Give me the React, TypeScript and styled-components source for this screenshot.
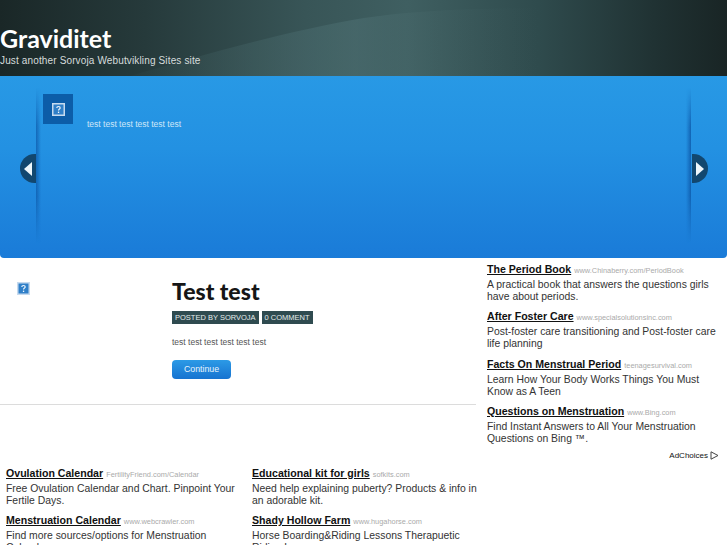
import React from 'react'
import styled, { createGlobalStyle } from 'styled-components'

const GlobalStyle = createGlobalStyle`
  html, body {
    margin: 0;
    padding: 0;
    height: 545px;
    overflow: hidden;
    background: #fff;
    font-family: "Liberation Sans", Arial, sans-serif;
  }
`

const Page = styled.div`
  width: 727px;
  height: 545px;
  overflow: hidden;
`

const Header = styled.header`
  position: relative;
  height: 76px;
  box-sizing: border-box;
  padding-top: 24px;
  overflow: hidden;
  background: linear-gradient(
    90deg,
    #1a2727 0%,
    #263a3b 20%,
    #385557 42%,
    #3f5f61 56%,
    #2f4b4d 74%,
    #203233 90%,
    #192525 100%
  );
`

const Swoosh = styled.svg`
  position: absolute;
  left: 0;
  top: 0;
`

const SiteTitle = styled.h1`
  position: relative;
  margin: 0;
  font-family: Lato, sans-serif;
  font-size: 25px;
  line-height: 28px;
  font-weight: 700;
  color: #fff;
`

const Tagline = styled.div`
  position: relative;
  margin-top: 2px;
  font-size: 10px;
  line-height: 13px;
  letter-spacing: 0.14px;
  color: #d6dcdc;
`

const Banner = styled.section`
  position: relative;
  height: 182px;
  box-sizing: border-box;
  padding: 12px 36px 15px;
  border-radius: 0 0 4px 4px;
  background: linear-gradient(180deg, #2899e5 0%, #2391e2 40%, #1a7bd8 100%);
`

const SlidePanel = styled.div`
  position: relative;
  height: 100%;
  box-sizing: border-box;
  padding: 6px 0 0 7px;
  display: flex;
  align-items: flex-start;
  gap: 14px;

  &::before,
  &::after {
    content: '';
    position: absolute;
    top: 0;
    bottom: 0;
    width: 5px;
    -webkit-mask-image: linear-gradient(180deg, transparent 0%, #000 25%, #000 70%, transparent 100%);
    mask-image: linear-gradient(180deg, transparent 0%, #000 25%, #000 70%, transparent 100%);
  }

  &::before {
    left: 0;
    background: linear-gradient(90deg, rgba(14, 90, 170, 0.75), rgba(14, 90, 170, 0));
  }

  &::after {
    right: 0;
    background: linear-gradient(270deg, rgba(14, 90, 170, 0.85), rgba(14, 90, 170, 0));
  }
`

const Thumb = styled.div`
  width: 30px;
  height: 30px;
  flex: none;
  display: flex;
  align-items: center;
  justify-content: center;
  background: #0c5da8;
`

const SlideText = styled.p`
  margin: 25px 0 0;
  font-size: 8.5px;
  line-height: 11px;
  color: #cfe6f8;
`

const Arrow = styled.div<{ $side: 'left' | 'right' }>`
  position: absolute;
  top: 78px;
  ${(p) => (p.$side === 'left' ? 'left: 20px;' : 'right: 19px;')}
  width: 16px;
  height: 29px;
  display: flex;
  align-items: center;
  justify-content: center;
  background: #12476f;
  border-radius: ${(p) => (p.$side === 'left' ? '15px 0 0 15px' : '0 15px 15px 0')};
`

const Main = styled.div`
  display: flex;
  align-items: flex-start;
`

const Content = styled.div`
  width: 476px;
  flex: none;
`

const Post = styled.article`
  height: 147px;
  box-sizing: border-box;
  padding: 24px 0 0 17px;
  display: grid;
  grid-template-columns: 155px 1fr;
  border-bottom: 1px solid #dcdcdc;
`

const PostBody = styled.div`
  display: flex;
  flex-direction: column;
  align-items: flex-start;
`

const PostTitle = styled.h2`
  margin: -6px 0 0;
  font-family: Lato, sans-serif;
  font-size: 23px;
  line-height: 30px;
  font-weight: 900;
  color: #161616;
`

const Meta = styled.div`
  display: flex;
  gap: 3px;
  margin-top: 5px;
`

const MetaTag = styled.span`
  height: 13px;
  padding: 0 3px;
  font-size: 7.5px;
  line-height: 13px;
  text-transform: uppercase;
  color: #e4ecec;
  background: #2f4b50;
`

const PostText = styled.p`
  margin: 13px 0 0;
  font-size: 8.5px;
  line-height: 11px;
  color: #555;
`

const ContinueButton = styled.a`
  margin-top: 12px;
  width: 59px;
  height: 19px;
  text-align: center;
  font-size: 8.8px;
  line-height: 18px;
  color: #e8f4fc;
  border-radius: 4px;
  background: linear-gradient(180deg, #2c9ae6 0%, #1673d0 100%);
`

const AdColumn = styled.aside`
  margin: 4px 0 0 11px;
  width: 240px;
`

const AdRow = styled.div`
  display: grid;
  grid-template-columns: 246px 232px;
  margin: 61px 0 0 6px;
`

const Ad = styled.div`
  height: 47.4px;
  padding-right: 4px;
`

const AdHeading = styled.div`
  font-size: 10.6px;
  line-height: 14px;
  white-space: nowrap;
`

const AdTitle = styled.a`
  font-weight: 700;
  color: #111;
  text-decoration: underline;
`

const AdUrl = styled.span`
  margin-left: 3px;
  font-size: 7.4px;
  color: #aaa;
`

const AdText = styled.p`
  margin: 1px 0 0;
  font-size: 10.4px;
  line-height: 12px;
  color: #333;
`

const AdChoices = styled.div`
  margin-top: -2px;
  margin-right: 8px;
  display: flex;
  justify-content: flex-end;
  align-items: center;
  gap: 2px;
  font-size: 8px;
  line-height: 12px;
  color: #111;
`

const sideAds = [
  {
    title: 'The Period Book',
    url: 'www.Chinaberry.com/PeriodBook',
    text: 'A practical book that answers the questions girls have about periods.',
  },
  {
    title: 'After Foster Care',
    url: 'www.specialsolutionsinc.com',
    text: 'Post-foster care transitioning and Post-foster care life planning',
  },
  {
    title: 'Facts On Menstrual Period',
    url: 'teenagesurvival.com',
    text: 'Learn How Your Body Works Things You Must Know as A Teen',
  },
  {
    title: 'Questions on Menstruation',
    url: 'www.Bing.com',
    text: 'Find Instant Answers to All Your Menstruation Questions on Bing \u2122.',
  },
]

const bottomAds = [
  {
    title: 'Ovulation Calendar',
    url: 'FertilityFriend.com/Calendar',
    text: 'Free Ovulation Calendar and Chart. Pinpoint Your Fertile Days.',
  },
  {
    title: 'Educational kit for girls',
    url: 'sofkits.com',
    text: 'Need help explaining puberty? Products & info in an adorable kit.',
  },
  {
    title: 'Menstruation Calendar',
    url: 'www.webcrawler.com',
    text: 'Find more sources/options for Menstruation Calendars',
  },
  {
    title: 'Shady Hollow Farm',
    url: 'www.hugahorse.com',
    text: 'Horse Boarding&Riding Lessons Therapuetic Riding Lessons',
  },
]

const MissingImage = () => (
  <svg width="13" height="13" viewBox="0 0 13 13" aria-hidden="true">
    <rect x="0.75" y="0.75" width="11.5" height="11.5" fill="#2f7fc8" stroke="#c6daee" strokeWidth="1.5" />
    <path d="M4.8 5 C4.8 3 8.2 3 8.2 5 C8.2 6.2 6.5 6 6.5 7.6" fill="none" stroke="#eef6fc" strokeWidth="1.2" />
    <rect x="5.9" y="8.6" width="1.3" height="1.4" fill="#eef6fc" />
  </svg>
)

const AdList = ({ ads }: { ads: typeof sideAds }) => (
  <>
    {ads.map((ad) => (
      <Ad key={ad.title}>
        <AdHeading>
          <AdTitle>{ad.title}</AdTitle>
          <AdUrl>{ad.url}</AdUrl>
        </AdHeading>
        <AdText>{ad.text}</AdText>
      </Ad>
    ))}
  </>
)

const App = () => (
  <Page>
    <GlobalStyle />
    <Header>
      <Swoosh width="727" height="76" viewBox="0 0 727 76" aria-hidden="true">
        <defs>
          <linearGradient id="swoosh" x1="0" x2="1" y1="0" y2="0">
            <stop offset="0" stopColor="#4c6e70" stopOpacity="0.05" />
            <stop offset="0.55" stopColor="#4f7275" stopOpacity="0.5" />
            <stop offset="0.75" stopColor="#4a6b6d" stopOpacity="0.2" />
            <stop offset="1" stopColor="#3d5c5e" stopOpacity="0" />
          </linearGradient>
        </defs>
        <path d="M130 76 C200 56 290 30 364 18 C410 11 470 8 540 8 L540 76 Z" fill="url(#swoosh)" />
      </Swoosh>
      <SiteTitle>Graviditet</SiteTitle>
      <Tagline>Just another Sorvoja Webutvikling Sites site</Tagline>
    </Header>
    <Banner>
      <SlidePanel>
        <Thumb>
          <MissingImage />
        </Thumb>
        <SlideText>test test test test test test</SlideText>
      </SlidePanel>
      <Arrow $side="left">
        <svg width="8" height="14" viewBox="0 0 8 14" aria-hidden="true">
          <path d="M8 0 L0 7 L8 14 Z" fill="#eef6fb" />
        </svg>
      </Arrow>
      <Arrow $side="right">
        <svg width="8" height="14" viewBox="0 0 8 14" aria-hidden="true">
          <path d="M0 0 L8 7 L0 14 Z" fill="#eef6fb" />
        </svg>
      </Arrow>
    </Banner>
    <Main>
      <Content>
        <Post>
          <MissingImage />
          <PostBody>
            <PostTitle>Test test</PostTitle>
            <Meta>
              <MetaTag>Posted by Sorvoja</MetaTag>
              <MetaTag>0 Comment</MetaTag>
            </Meta>
            <PostText>test test test test test test</PostText>
            <ContinueButton>Continue</ContinueButton>
          </PostBody>
        </Post>
        <AdRow>
          <AdList ads={bottomAds} />
        </AdRow>
      </Content>
      <AdColumn>
        <AdList ads={sideAds} />
        <AdChoices>
          AdChoices
          <svg width="9" height="9" viewBox="0 0 9 9" aria-hidden="true">
            <path d="M1 0.8 L8 4.5 L1 8.2 Z" fill="none" stroke="#444" strokeWidth="1" />
          </svg>
        </AdChoices>
      </AdColumn>
    </Main>
  </Page>
)

export default App
